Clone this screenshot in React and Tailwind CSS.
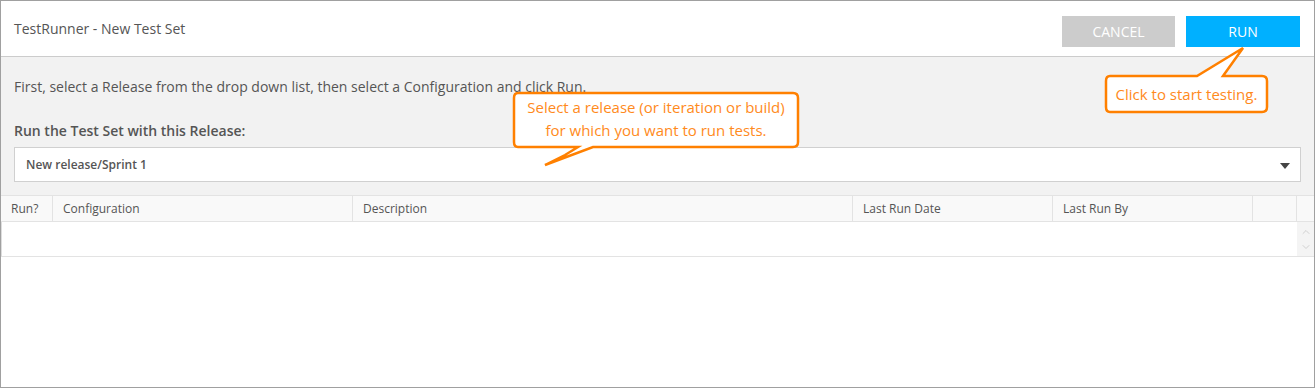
import { ChevronUp, ChevronDown } from "lucide-react";

const font = { fontFamily: '"Open Sans", "Noto Sans", sans-serif' };

const Callout = ({ className, width, height, tail, children }) => (
  <div className={`absolute ${className}`}>
    <svg className="absolute left-0 top-0 overflow-visible" width={width} height={height}>
      <path d={tail} fill="#fff" stroke="#ff8000" strokeWidth="2.5" strokeLinejoin="miter" />
    </svg>
    {children}
  </div>
);

const cols = [
  { label: "Run?", w: "w-[52px]" },
  { label: "Configuration", w: "w-[300px]" },
  { label: "Description", w: "w-[500px]" },
  { label: "Last Run Date", w: "w-[200px]" },
  { label: "Last Run By", w: "w-[200px]" },
  { label: "", w: "w-[44px]" },
];

export default function App() {
  return (
    <div
      className="relative w-[1315px] h-[388px] border border-[#a0a0a0] bg-white flex flex-col text-[#555]"
      style={font}
    >
      <div className="h-[56px] shrink-0 border-b border-[#cccccc] flex items-start justify-between pl-[13px] pr-[14px]">
        <div className="mt-[18px] text-[14px] leading-5">TestRunner - New Test Set</div>
        <div className="flex gap-[11px] mt-[15px]">
          <button className="w-[113px] h-[31px] bg-[#cccccc] text-white text-[14px]">CANCEL</button>
          <button className="w-[114px] h-[31px] bg-[#00b0ff] text-white text-[14px]">RUN</button>
        </div>
      </div>

      <div className="h-[138px] shrink-0 bg-[#f2f2f2] px-[13px] pt-[20px]">
        <div className="text-[14px] leading-5">
          First, select a Release from the drop down list, then select a Configuration and click Run.
        </div>
        <div className="mt-[24px] text-[14px] leading-5 font-semibold">Run the Test Set with this Release:</div>
        <div className="mt-[6px] h-[35px] w-[1287px] border border-[#d0d0d0] bg-white flex items-center justify-between pl-[11px] pr-[10px]">
          <span className="text-[12px] font-semibold text-[#555]">New release/Sprint 1</span>
          <span className="w-0 h-0 border-l-[5px] border-r-[5px] border-t-[6px] border-l-transparent border-r-transparent border-t-[#444] mt-[3px]"></span>
        </div>
      </div>

      <div className="flex border-y border-[#e3e3e3] bg-[#f9f9f9] h-[27px] shrink-0">
        {cols.map((c) => (
          <div key={c.label + c.w} className={`${c.w} shrink-0 border-r border-[#e3e3e3] px-[10px] text-[12px] leading-[25px]`}>
            {c.label}
          </div>
        ))}
        <div className="flex-1"></div>
      </div>
      <div className="flex h-[35px] shrink-0 border-b border-[#e3e3e3] border-l border-l-[#dddddd]">
        <div className="flex-1 bg-white"></div>
        <div className="w-[17px] bg-[#f4f4f4] flex flex-col items-center justify-center text-[#c4c4c4]">
          <ChevronUp size={12} strokeWidth={1.5} />
          <ChevronDown size={12} strokeWidth={1.5} className="mt-[3px]" />
        </div>
      </div>
      <div className="flex-1"></div>

      <Callout
        className="left-[512px] top-[91px] w-[286px] h-[56px]"
        width={286}
        height={56}
        tail="M5,1 H280 Q285,1 285,6 V50 Q285,55 280,55 H80 L32,73 L52,63 L65,55 H5 Q1,55 1,50 V6 Q1,1 5,1 Z"
      >
        <div className="relative text-[15px] leading-[23px] text-[#ff8a1c] text-center pt-[4px]">
          Select a release (or iteration or build)
          <br />
          for which you want to run tests.
        </div>
      </Callout>

      <Callout
        className="left-[1104px] top-[74px] w-[163px] h-[38px]"
        width={163}
        height={38}
        tail="M5,1 H92 L138,-27 L118,1 H157 Q162,1 162,6 V32 Q162,37 157,37 H5 Q1,37 1,32 V6 Q1,1 5,1 Z"
      >
        <div className="relative text-[15px] leading-[38px] text-[#ff8a1c] text-center">Click to start testing.</div>
      </Callout>
    </div>
  );
}
